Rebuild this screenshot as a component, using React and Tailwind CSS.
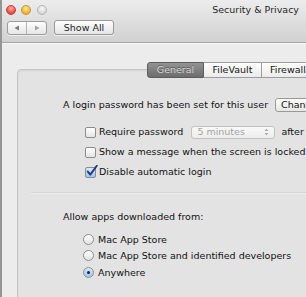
import React from "react";

const Checkbox = ({ checked }) => (
  <div
    className={
      "relative shrink-0 w-[11px] h-[11px] rounded-[2px] border border-[#8c8c8c] " +
      (checked
        ? "bg-gradient-to-b from-[#dbe9fb] to-[#9fc4ef]"
        : "bg-gradient-to-b from-white to-[#e4e4e4]")
    }
  >
    {checked && (
      <svg className="absolute -top-[3px] left-[0px] w-[12px] h-[12px]" viewBox="0 0 12 12">
        <path d="M1.8 6.6 L4.3 9.6 L10.8 0.8" stroke="#1d3b80" strokeWidth="1.9" fill="none" strokeLinecap="round" strokeLinejoin="round" />
      </svg>
    )}
  </div>
);

const Radio = ({ checked }) => (
  <div
    className={
      "relative shrink-0 w-[11px] h-[11px] rounded-full border border-[#8e8e8e] flex items-center justify-center " +
      (checked
        ? "bg-gradient-to-b from-[#dbe9fb] to-[#9fc4ef]"
        : "bg-gradient-to-b from-white to-[#e2e2e2]")
    }
  >
    {checked && <div className="w-[3px] h-[3px] rounded-full bg-[#1a2540]" />}
  </div>
);

export default function App() {
  return (
    <div className="w-[306px] h-[297px] overflow-hidden flex bg-[#ececec] text-[9.5px] text-[#111111] font-['DejaVu_Sans',sans-serif] leading-none whitespace-nowrap">
      <div className="w-[2px] shrink-0 bg-[#959595]" />
      <div className="flex-1 min-w-0 flex flex-col">
        {/* Title bar */}
        <div className="h-[43px] shrink-0 flex flex-col border-b border-[#a5a5a5] bg-gradient-to-b from-[#ececec] to-[#d1d1d1]">
          <div className="h-[19px] flex items-center pl-[4px]">
            <div className="shrink-0 w-[10px] h-[10px] rounded-full border border-[#c0413b] bg-[radial-gradient(circle_at_50%_30%,#ffb0a8,#ee5a52_55%,#c9362f)]" />
            <div className="shrink-0 ml-[5px] w-[10px] h-[10px] rounded-full border border-[#c7952f] bg-[radial-gradient(circle_at_50%_30%,#ffe7a3,#f6bd3c_55%,#d9982a)]" />
            <div className="shrink-0 ml-[6px] w-[10px] h-[10px] rounded-full border border-[#b5b5b5] bg-[radial-gradient(circle_at_50%_30%,#f8f8f8,#dcdcdc_60%,#c8c8c8)]" />
            <div className="ml-auto pr-[7px] text-[#262626]">Security &amp; Privacy</div>
          </div>
          <div className="mt-[1px] flex items-start pl-[5px]">
            <div className="shrink-0 mt-[1px] w-[40px] h-[14px] flex rounded-[3px] border border-[#9c9c9c] bg-gradient-to-b from-[#fdfdfd] to-[#e6e6e6] shadow-[0_1px_0_rgba(255,255,255,0.6)]">
              <div className="w-[19px] flex items-center justify-center border-r border-[#b4b4b4]">
                <svg width="6" height="6" viewBox="0 0 6 6"><path d="M5 0.5 L0.5 3 L5 5.5 Z" fill="#7a7a7a" /></svg>
              </div>
              <div className="flex-1 flex items-center justify-center">
                <svg width="6" height="6" viewBox="0 0 6 6"><path d="M1 0.5 L5.5 3 L1 5.5 Z" fill="#a3a3a3" /></svg>
              </div>
            </div>
            <div className="shrink-0 ml-[7px] w-[60px] h-[15px] flex items-center justify-center rounded-[3px] border border-[#9a9a9a] bg-gradient-to-b from-[#fdfdfd] to-[#e4e4e4] text-[#1e1e1e] shadow-[0_1px_0_rgba(255,255,255,0.6)]">
              Show All
            </div>
          </div>
        </div>

        {/* Content */}
        <div className="flex-1 pl-[15px] shadow-[inset_0_1px_0_#f6f6f6]">
          <div className="relative z-10 mt-[19px] ml-[130px] flex h-[16px]">
            <div className="shrink-0 w-[57px] flex items-center justify-center rounded-l-[3px] border border-[#5d5d5d] bg-gradient-to-b from-[#939393] to-[#6d6d6d] text-[#d4d4d4] [text-shadow:0_-1px_0_rgba(0,0,0,0.35)]">
              General
            </div>
            <div className="shrink-0 w-[58px] flex items-center justify-center border-y border-r border-[#9d9d9d] bg-gradient-to-b from-white to-[#ebebeb]">
              FileVault
            </div>
            <div className="shrink-0 w-[58px] flex items-center pl-[8px] border-y border-r border-[#9d9d9d] bg-gradient-to-b from-white to-[#ebebeb]">
              Firewall
            </div>
          </div>
          <div className="-mt-[9px] w-[400px] h-[300px] rounded-tl-[4px] border border-[#c4c4c4] bg-[#e3e3e3] shadow-[inset_0_1px_2px_rgba(0,0,0,0.07)] pl-[45px] pt-[27px] flex flex-col">
            <div className="h-[15px] flex items-center">
              <span className="shrink-0">A login password has been set for this user</span>
              <div className="shrink-0 ml-[7px] h-[14px] px-[5px] flex items-center rounded-[3px] border border-[#999999] bg-gradient-to-b from-white to-[#e6e6e6]">
                Change Password…
              </div>
            </div>

            <div className="mt-[13px] pl-[22px] flex flex-col gap-[6px]">
              <div className="h-[14px] flex items-center">
                <Checkbox />
                <span className="shrink-0 ml-[3px]">Require password</span>
                <div className="shrink-0 ml-[8px] w-[84px] h-[13px] flex items-center pl-[5px] pr-[5px] rounded-[3px] border border-[#c2c2c2] bg-gradient-to-b from-[#f8f8f8] to-[#ededed] text-[#a2a2a2]">
                  <span>5 minutes</span>
                  <svg className="ml-auto" width="5" height="8" viewBox="0 0 5 8">
                    <path d="M0.5 3 L2.5 0.8 L4.5 3 Z M0.5 5 L2.5 7.2 L4.5 5 Z" fill="#a8a8a8" />
                  </svg>
                </div>
                <span className="shrink-0 ml-[6px]">after</span>
              </div>
              <div className="h-[14px] flex items-center">
                <Checkbox />
                <span className="shrink-0 ml-[3px]">Show a message when the screen is locked</span>
              </div>
              <div className="h-[14px] flex items-center">
                <Checkbox checked />
                <span className="shrink-0 ml-[3px]">Disable automatic login</span>
              </div>
            </div>

            <div className="mt-[13px] -ml-[32px] w-[360px] h-[2px] border-t border-[#d6d6d6] bg-[#ededed]" />

            <div className="mt-[16px] h-[14px] flex items-center">Allow apps downloaded from:</div>

            <div className="mt-[7px] pl-[20px] flex flex-col">
              <div className="h-[16.5px] flex items-center">
                <Radio />
                <span className="ml-[4px]">Mac App Store</span>
              </div>
              <div className="h-[16.5px] flex items-center">
                <Radio />
                <span className="ml-[4px]">Mac App Store and identified developers</span>
              </div>
              <div className="h-[16.5px] flex items-center">
                <Radio checked />
                <span className="ml-[4px]">Anywhere</span>
              </div>
            </div>
          </div>
        </div>
      </div>
    </div>
  );
}
